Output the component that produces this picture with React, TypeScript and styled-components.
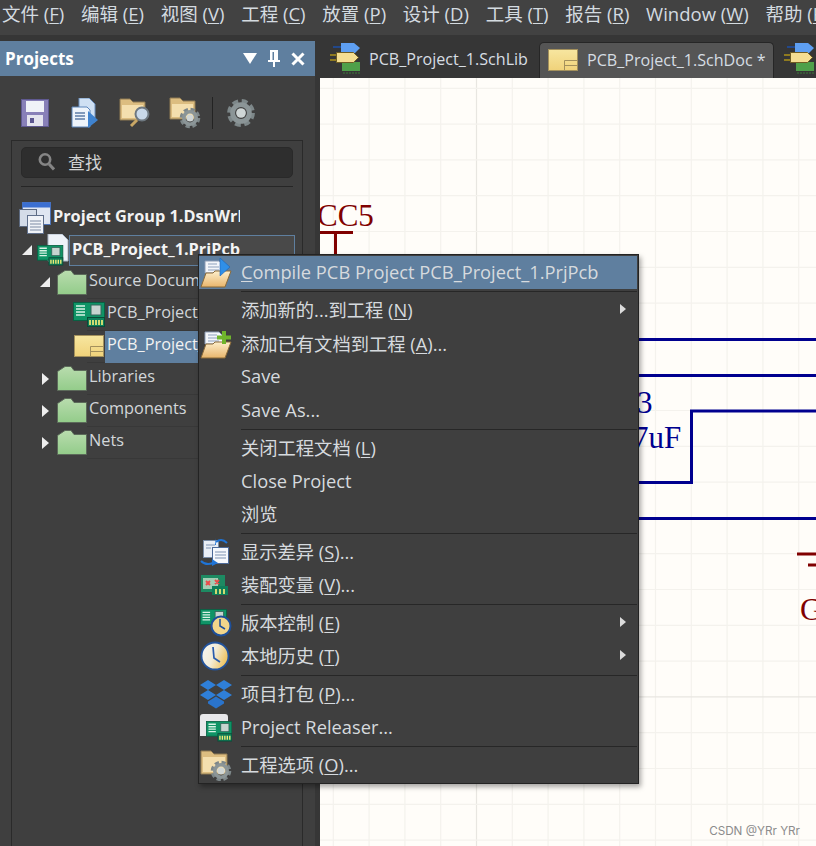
import { ReactNode } from 'react'
import styled, { createGlobalStyle } from 'styled-components'

const UI_FONT = `'Open Sans', 'Noto Sans CJK SC', sans-serif`

const GlobalStyle = createGlobalStyle`
  html, body {
    margin: 0;
    padding: 0;
    background: #363636;
  }
`

const Root = styled.div`
  position: relative;
  width: 816px;
  height: 846px;
  overflow: hidden;
  display: flex;
  flex-direction: column;
  background: #363636;
  font-family: ${UI_FONT};
  color: #d6dadd;
`

const MenuBar = styled.div`
  height: 35px;
  box-sizing: border-box;
  flex: none;
  display: flex;
  align-items: center;
  gap: 16.7px;
  padding: 0 0 9px 2px;
  background: #424242;
  font-size: 18.5px;
  white-space: nowrap;
  color: #d4dbe0;
`

const Access = styled.span`
  text-decoration: underline;
  text-underline-offset: 2px;
  text-decoration-thickness: 1px;
`

const Workspace = styled.div`
  flex: 1;
  min-height: 0;
  display: flex;
  padding-top: 6px;
  gap: 5px;
`

const Panel = styled.div`
  width: 315px;
  flex: none;
  display: flex;
  flex-direction: column;
  background: #3f3f3f;
`

const PanelTitle = styled.div`
  height: 35px;
  flex: none;
  display: flex;
  align-items: center;
  padding: 0 10px 0 5px;
  background: #5f7f9f;
  color: #fff;
  font-size: 17px;
  font-weight: 700;
`

const PanelName = styled.span`
  flex: 1;
`

const PanelControls = styled.div`
  display: flex;
  align-items: center;
  gap: 11px;
`

const Toolbar = styled.div`
  flex: none;
  height: 36px;
  display: flex;
  align-items: center;
  padding: 19px 0 9px 10px;
`

const Tool = styled.div`
  width: 50px;
  display: flex;
  justify-content: center;
`

const ToolSep = styled.div`
  width: 1px;
  height: 32px;
  margin: 0 3px 0 2px;
  background: #232323;
`

const TreeBox = styled.div`
  flex: 1;
  min-height: 0;
  margin: 0 12px 0 11px;
  border: 1px solid #2a2a2a;
  border-bottom: none;
  overflow: hidden;
`

const SearchBox = styled.div`
  height: 27px;
  margin: 6px 9px 0;
  display: flex;
  align-items: center;
  gap: 13px;
  padding: 0 0 2px 16px;
  background: #2e2e2e;
  border: 1px solid #292929;
  border-radius: 5px;
  font-size: 17px;
  color: #d4d4d4;
`

const TreeRule = styled.div`
  height: 1px;
  margin: 8px 9px 16px;
  background: #262626;
`

const TreeRow = styled.div<{ $indent: number; $rule?: boolean }>`
  height: 32px;
  box-sizing: border-box;
  display: flex;
  align-items: center;
  padding: 0 0 2px ${(p) => p.$indent}px;
  font-size: 16.3px;
  white-space: nowrap;
  background-image: ${(p) => (p.$rule ? 'linear-gradient(#383838, #383838)' : 'none')};
  background-repeat: no-repeat;
  background-position: 75px bottom;
  background-size: 100% 1px;
`

const ToggleSlot = styled.div<{ $wide?: boolean }>`
  width: ${(p) => (p.$wide ? 19 : 17)}px;
  flex: none;
`

const Toggle = styled.div<{ $open?: boolean }>`
  width: 0;
  height: 0;
  ${(p) =>
    p.$open
      ? `
    margin-left: 2px;
    border-bottom: 10px solid #eee;
    border-left: 10px solid transparent;
  `
      : `
    margin: 2px 0 0 4px;
    border-left: 7px solid #eee;
    border-top: 6px solid transparent;
    border-bottom: 6px solid transparent;
  `}
`

const TreeLabel = styled.span<{ $strong?: boolean }>`
  margin: 0 0 4px 2px;
  font-weight: ${(p) => (p.$strong ? 700 : 400)};
  color: ${(p) => (p.$strong ? '#f2f2f2' : '#d2d6d9')};
`

const ActiveLabel = styled.span`
  flex: 1;
  align-self: flex-start;
  height: 32px;
  margin: 0 0 -2px 1px;
  padding-left: 2px;
  line-height: 26px;
  color: #f2f2f2;
  background: #5f7f9f;
`

const ClippedLabel = styled(TreeLabel)`
  width: 187px;
  overflow: hidden;
`

const ProjectLabel = styled.div`
  flex: 1;
  align-self: flex-start;
  height: 31px;
  box-sizing: border-box;
  margin-right: 7px;
  padding: 0 0 4px 2px;
  display: flex;
  align-items: center;
  background: #494949;
  border: 1px solid #5f7f9f;
  font-weight: 700;
  color: #f4f4f4;
`

const Editor = styled.div`
  flex: 1;
  min-width: 0;
  display: flex;
  flex-direction: column;
`

const TabBar = styled.div`
  height: 37px;
  flex: none;
  display: flex;
  align-items: flex-end;
  background: #363636;
  font-size: 16.1px;
  white-space: nowrap;
`

const Tab = styled.div<{ $active?: boolean }>`
  height: ${(p) => (p.$active ? '36px' : '37px')};
  box-sizing: border-box;
  display: flex;
  align-items: center;
  gap: ${(p) => (p.$active ? '9px' : '8px')};
  padding: 0 ${(p) => (p.$active ? '7px' : '11px')} 2px ${(p) => (p.$active ? '8px' : '9px')};
  background: ${(p) => (p.$active ? '#555' : 'transparent')};
  border: ${(p) => (p.$active ? '1px solid #262626' : 'none')};
  border-bottom: none;
  border-radius: 5px 5px 0 0;
  color: #d6dde3;
`

const Canvas = styled.div`
  position: relative;
  flex: 1;
  min-height: 0;
  background: #fffdf9;
  overflow: hidden;
`

const Sheet = styled.svg`
  display: block;
`

const Watermark = styled.div`
  position: absolute;
  right: 16px;
  bottom: 8px;
  font-size: 11.7px;
  color: #8c8c8c;
  font-family: Inter, sans-serif;
`

const ContextMenu = styled.div`
  position: absolute;
  left: 198px;
  top: 254px;
  width: 441px;
  box-sizing: border-box;
  padding: 1px 1px 1px 0;
  background: #3f3f3f;
  border: 1px solid #232323;
  box-shadow: 2px 3px 5px rgba(0, 0, 0, 0.35);
  font-size: 18.3px;
  white-space: nowrap;
  color: #d6dade;
`

const MenuEntry = styled.div<{ $active?: boolean }>`
  height: 33.3px;
  box-sizing: border-box;
  padding-bottom: 2px;
  display: flex;
  align-items: center;
  background: ${(p) => (p.$active ? '#5f7f9f' : 'transparent')};
`

const MenuIcon = styled.div`
  width: 41px;
  padding: 2px 0 0 1px;
  flex: none;
  display: flex;
`

const MenuText = styled.span`
  flex: 1;
`

const MenuArrow = styled.div`
  width: 0;
  height: 0;
  margin-right: 11px;
  border-left: 6px solid #dcdcdc;
  border-top: 5px solid transparent;
  border-bottom: 5px solid transparent;
`

const MenuSep = styled.div`
  height: 1px;
  margin: 1.7px 0 1.7px 42px;
  background: #272727;
`

/* ─── icons ─────────────────────────────────────────────────── */

function Gear({ x, y, r }: { x: number; y: number; r: number }) {
  return (
    <g>
      <circle cx={x} cy={y} r={r * 0.86} fill="none" stroke="#7d8789" strokeWidth={r * 0.34} strokeDasharray={`${r * 0.42} ${r * 0.26}`} />
      <circle cx={x} cy={y} r={r * 0.62} fill="none" stroke="#8b9597" strokeWidth={r * 0.36} />
      <circle cx={x} cy={y} r={r * 0.36} fill="#cfd6d6" />
    </g>
  )
}

// green board with a chip and a connector flush to its right edge, 32x25
function PcbGlyph({ x, y, scale = 1 }: { x: number; y: number; scale?: number }) {
  return (
    <g transform={`translate(${x} ${y}) scale(${scale})`}>
      <rect x="0.5" y="0.5" width="31" height="18" fill="#0f9466" stroke="#0a5f43" />
      <path d="M3 4h9M3 7h9M3 10h9M3 13h9" stroke="#d9f3e6" strokeWidth="1.6" />
      <rect x="18" y="3" width="10" height="10" fill="#c6d4cf" stroke="#35665a" />
      <rect x="14.500" y="15.500" width="17" height="9" fill="#0f7f5a" stroke="#0a4a37" />
      <path d="M17 18v5M20 18v5M23 18v5M26 18v5M29 18v5" stroke="#f0ea76" strokeWidth="1.7" />
    </g>
  )
}

function OpenFolder() {
  return (
    <g>
      <path d="M5 3h14l4 4v8H5z" fill="#f4f6fa" stroke="#8b9bb4" />
      <path d="M8 6h9M8 9h11M8 12h11" stroke="#8ea1bd" />
      <path d="M1 29 6 15h7l2-2h16l-6 16z" fill="url(#openFolder)" stroke="#8b6a38" strokeLinejoin="round" />
      <defs>
        <linearGradient id="openFolder" x1="0" y1="0" x2="0" y2="1">
          <stop offset="0" stopColor="#fdeecb" />
          <stop offset="1" stopColor="#e8b56c" />
        </linearGradient>
      </defs>
    </g>
  )
}

const SaveIcon = () => (
  <svg width="28" height="28" viewBox="0 0 28 28">
    <rect x="0.5" y="0.5" width="27" height="27" fill="#8880b8" stroke="#5f5990" />
    <rect x="5" y="2" width="18" height="11" fill="#f0f2f8" />
    <rect x="6" y="16" width="16" height="11" fill="#e4e4ee" />
    <rect x="9" y="19" width="4" height="5" fill="#5c5690" />
  </svg>
)

const DocsIcon = () => (
  <svg width="28" height="30" viewBox="0 0 28 30">
    <path d="M8 0h10l6 6v18H8z" fill="#cfe0f3" stroke="#6b8fbe" />
    <path d="M1 9h15l3 3v17H1z" fill="#eef4fb" stroke="#5d86bb" />
    <path d="M4 15h10M4 18h10M4 21h10" stroke="#5d7ca8" strokeWidth="1.4" />
    <path d="M17 13l10 9-10 8z" fill="#3f83cf" />
  </svg>
)

const FolderSearchIcon = () => (
  <svg width="32" height="30" viewBox="0 0 32 30">
    <path d="M1 1h10l3 3h12v18H1z" fill="#dcbd80" stroke="#8f7a52" />
    <rect x="3" y="7" width="21" height="13" fill="#f4dfae" />
    <path d="M12 28l6-6" stroke="#c9a765" strokeWidth="3" />
    <circle cx="23" cy="16" r="6.5" fill="#c9d9ea" stroke="#6e7880" strokeWidth="2" />
  </svg>
)

const FolderGearIcon = () => (
  <svg width="32" height="32" viewBox="0 0 32 32">
    <path d="M1 1h10l3 3h12v18H1z" fill="#dcbd80" stroke="#8f7a52" />
    <rect x="3" y="7" width="21" height="13" fill="#f4dfae" />
    <Gear x={21} y={21} r={10} />
  </svg>
)

const GearIcon = () => (
  <svg width="28" height="28" viewBox="0 0 28 28">
    <Gear x={14} y={14} r={13.5} />
  </svg>
)

const SearchGlyph = () => (
  <svg width="17" height="19" viewBox="0 0 17 19">
    <circle cx="7" cy="7.5" r="5.2" fill="none" stroke="#858585" strokeWidth="2.6" />
    <path d="M11 12l5 5.5" stroke="#858585" strokeWidth="3" />
  </svg>
)

const DownCaret = () => (
  <svg width="14" height="11" viewBox="0 0 14 11">
    <path d="M0 0h14L7 11z" fill="#fff" />
  </svg>
)

const PinGlyph = () => (
  <svg width="12" height="17" viewBox="0 0 12 17">
    <path d="M2 0h8v10h2v2H0v-2h2zM4.5 2v8h1.5V2zM5 12h2v5H5z" fill="#fff" fillRule="evenodd" />
  </svg>
)

const CloseGlyph = () => (
  <svg width="14" height="14" viewBox="0 0 14 14">
    <path d="M1.5 1.5l11 11M12.5 1.5l-11 11" stroke="#fff" strokeWidth="3" />
  </svg>
)

const GroupIcon = () => (
  <svg width="32" height="32" viewBox="0 0 32 32">
    <rect x="3.5" y="0.5" width="28" height="22" fill="#dfe6f2" stroke="#4f74b8" />
    <rect x="3.5" y="0.5" width="28" height="5" fill="#3b6fd1" />
    <rect x="0.5" y="7.5" width="17" height="17" fill="#d4dce8" stroke="#5d6a80" />
    <rect x="8.5" y="13.5" width="16" height="18" fill="#f0f3f8" stroke="#60708c" />
    <path d="M11 19h11M11 22h11M11 25h11M11 28h11" stroke="#7d8ba4" />
  </svg>
)

const ProjectIcon = () => (
  <svg width="32" height="32" viewBox="0 0 32 32">
    <path d="M11 0h14l6 6v21H11z" fill="#eef2f8" stroke="#aab6c6" />
    <PcbGlyph x={0} y={11} scale={0.82} />
  </svg>
)

const GreenFolder = () => (
  <svg width="30" height="25" viewBox="0 0 30 25">
    <defs>
      <linearGradient id="greenFolder" x1="0" y1="0" x2="0" y2="1">
        <stop offset="0" stopColor="#b9dcae" />
        <stop offset="1" stopColor="#93cc8a" />
      </linearGradient>
    </defs>
    <path d="M0.5 5.5 8 0.5h6l3 4h12.5v20H0.5z" fill="url(#greenFolder)" stroke="#5c6a5a" />
  </svg>
)

const PcbIcon = () => (
  <svg width="32" height="25" viewBox="0 0 32 25">
    <PcbGlyph x={0} y={0} />
  </svg>
)

const SchDocIcon = () => (
  <svg width="30" height="22" viewBox="0 0 30 22">
    <defs>
      <linearGradient id="schDoc" x1="0" y1="0" x2="0" y2="1">
        <stop offset="0" stopColor="#f7e6a0" />
        <stop offset="1" stopColor="#f0d27a" />
      </linearGradient>
    </defs>
    <rect x="0.5" y="0.5" width="29" height="21" fill="url(#schDoc)" stroke="#a3905c" />
    <path d="M16.5 21.5v-10h13M16.5 16.5h13" fill="none" stroke="#a3905c" />
  </svg>
)

const SchLibIcon = () => (
  <svg width="32" height="31" viewBox="0 0 32 31">
    <path d="M13 4H4" stroke="#1d4fa8" strokeWidth="1.5" />
    <path d="M12 0h13l6 5-6 6H12z" fill="#5e9ff2" />
    <rect x="13" y="19" width="18" height="9" fill="#4fa04a" />
    <path d="M15 29v2M18 29v2M21 29v2M24 29v2M27 29v2M30 29v2" stroke="#3b7a38" />
    <path d="M1 12h7M1 17h7" stroke="#8f7a1f" strokeWidth="2" />
    <path d="M7.5 9.5h17l5 5-5 5h-17z" fill="#f4de92" stroke="#6f5d22" />
  </svg>
)

const CompileIcon = () => (
  <svg width="32" height="30" viewBox="0 0 32 30">
    <OpenFolder />
    <path d="M20 0l10 9-10 9z" fill="#2f8fe8" stroke="#1d63b5" strokeWidth="0.6" />
  </svg>
)

const AddFolderIcon = () => (
  <svg width="32" height="30" viewBox="0 0 32 30">
    <OpenFolder />
    <path d="M24 2v13M17 8.500h14" stroke="#6fb52c" strokeWidth="4" />
  </svg>
)

const DiffIcon = () => (
  <svg width="30" height="30" viewBox="0 0 30 30">
    <rect x="3.500" y="3.500" width="15" height="17" fill="#e9eef6" stroke="#7a8ca6" />
    <rect x="12.500" y="10.500" width="16" height="16" fill="#f6f8fc" stroke="#4d6a98" />
    <path d="M15 15h11M15 18h11M15 21h11M6 8h9M6 11h5" stroke="#7f93b2" />
    <path d="M16 5c4-3 8-2 11 1" fill="none" stroke="#1f74d6" strokeWidth="2" />
    <path d="M16 1v7h-1z" fill="#1f74d6" />
    <path d="M1 24c3 3 7 4 12 2" fill="none" stroke="#1f74d6" strokeWidth="2" />
    <path d="M12 22l6 4-6 3z" fill="#1f74d6" />
  </svg>
)

const VariantIcon = () => (
  <svg width="28" height="20" viewBox="0 0 28 20">
    <rect x="1" y="0" width="24" height="17" fill="#1d8a62" />
    <rect x="3" y="3" width="15" height="11" fill="#a4cdb4" />
    <path d="M6 6l4 4M10 6l-4 4M15 5l4 4M19 5l-4 4" stroke="#ea4a4a" strokeWidth="1.900" />
    <rect x="12" y="11" width="16" height="9" fill="#0f7f5a" />
    <path d="M16 14v5M20 14v5M24 14v5" stroke="#f0ea76" strokeWidth="1.700" />
  </svg>
)

const VersionIcon = () => (
  <svg width="32" height="28" viewBox="0 0 32 28">
    <PcbGlyph x={0} y={0} scale={0.84} />
    <circle cx="21" cy="17" r="9.500" fill="#f1d58a" stroke="#1d4f9a" strokeWidth="2" />
    <path d="M20 10v7l5 3" fill="none" stroke="#1d4f9a" strokeWidth="1.500" />
  </svg>
)

const ClockIcon = () => (
  <svg width="30" height="30" viewBox="0 0 30 30">
    <defs>
      <linearGradient id="clockFace" x1="0" y1="0" x2="1" y2="0.4">
        <stop offset="0" stopColor="#f6f6f6" />
        <stop offset="0.55" stopColor="#f2ecd8" />
        <stop offset="1" stopColor="#eec566" />
      </linearGradient>
    </defs>
    <circle cx="15" cy="15" r="13.500" fill="url(#clockFace)" stroke="#23539c" strokeWidth="1.800" />
    <path d="M13 6l1 11 6 4" fill="none" stroke="#2a5cad" strokeWidth="1.700" />
  </svg>
)

const DropboxIcon = () => (
  <svg width="32" height="30" viewBox="0 0 32 30">
    <path d="M8 1l8 5-8 5-8-5zM24 1l8 5-8 5-8-5zM8 11l8 5-8 5-8-5zM24 11l8 5-8 5-8-5z" fill="#2f7fd8" />
    <path d="M8 22.500l8-5 8 5v2l-8 5-8-5z" fill="#2a74cc" />
  </svg>
)

const ReleaserIcon = () => (
  <svg width="32" height="29" viewBox="0 0 32 29">
    <path d="M0 23V4q0-3 3-3h22q3 0 3 3v6H8v13z" fill="#e8e8ea" />
    <PcbGlyph x={6} y={8} scale={0.82} />
  </svg>
)

const OptionsIcon = () => (
  <svg width="32" height="31" viewBox="0 0 32 31">
    <path d="M1 1h10l3 3h13v20H1z" fill="#dcbd80" stroke="#8f7a52" />
    <rect x="3" y="7" width="22" height="15" fill="#f4dfae" />
    <Gear x={21} y={21} r={10} />
  </svg>
)

/* ─── data ──────────────────────────────────────────────────── */

const MENUS: [string, string, string][] = [
  ['文件 (', 'F', ')'],
  ['编辑 (', 'E', ')'],
  ['视图 (', 'V', ')'],
  ['工程 (', 'C', ')'],
  ['放置 (', 'P', ')'],
  ['设计 (', 'D', ')'],
  ['工具 (', 'T', ')'],
  ['报告 (', 'R', ')'],
  ['Window (', 'W', ')'],
  ['帮助 (', 'H', ')'],
]

type Entry =
  | { sep: true }
  | { sep?: false; text: string; access?: string; tail?: string; icon?: ReactNode; sub?: boolean; active?: boolean }

const ENTRIES: Entry[] = [
  { text: '', access: 'C', tail: 'ompile PCB Project PCB_Project_1.PrjPcb', icon: <CompileIcon />, active: true },
  { sep: true },
  { text: '添加新的...到工程 (', access: 'N', tail: ')', sub: true },
  { text: '添加已有文档到工程 (', access: 'A', tail: ')...', icon: <AddFolderIcon /> },
  { text: 'Save' },
  { text: 'Save As...' },
  { sep: true },
  { text: '关闭工程文档 (', access: 'L', tail: ')' },
  { text: 'Close Project' },
  { text: '浏览' },
  { sep: true },
  { text: '显示差异 (', access: 'S', tail: ')...', icon: <DiffIcon /> },
  { text: '装配变量 (', access: 'V', tail: ')...', icon: <VariantIcon /> },
  { sep: true },
  { text: '版本控制 (', access: 'E', tail: ')', icon: <VersionIcon />, sub: true },
  { text: '本地历史 (', access: 'T', tail: ')', icon: <ClockIcon />, sub: true },
  { sep: true },
  { text: '项目打包 (', access: 'P', tail: ')...', icon: <DropboxIcon /> },
  { text: 'Project Releaser...', icon: <ReleaserIcon /> },
  { sep: true },
  { text: '工程选项 (', access: 'O', tail: ')...', icon: <OptionsIcon /> },
]

const GRID_X = Array.from({ length: 14 }, (_, i) => 333.3 + i * 35.8)
const GRID_Y = Array.from({ length: 22 }, (_, i) => 88.3 + i * 35.8)
const WIRE = '#00008f'
const PART = '#800000'
const SERIF = "'Liberation Serif', serif"

function Schematic() {
  return (
    <Sheet width="496" height="768" viewBox="320 78 496 768">
      {GRID_X.map((x, i) => (
        <line key={x} x1={x} x2={x} y1="78" y2="846" stroke={i === 4 ? '#e8e6e1' : '#f4f2ed'} strokeWidth="1.2" />
      ))}
      {GRID_Y.map((y, i) => (
        <line key={y} x1="320" x2="816" y1={y} y2={y} stroke={i === 17 ? '#e8e6e1' : '#f4f2ed'} strokeWidth="1.2" />
      ))}
      <path d="M320 232.500h33M335.500 232.500v24" fill="none" stroke={PART} strokeWidth="3" />
      <text x="317" y="226" fontFamily={SERIF} fontSize="31" fill={PART}>
        CC5
      </text>
      <path
        d="M630 339.500h186M630 375.500h186M816 411h-124.500v71.500H630M630 518.500h186"
        fill="none"
        stroke={WIRE}
        strokeWidth="3"
      />
      <text x="637" y="413" fontFamily={SERIF} fontSize="31" fill={WIRE}>
        3
      </text>
      <text x="633" y="448" fontFamily={SERIF} fontSize="31" fill={WIRE}>
        7uF
      </text>
      <path d="M797 554h19M808 565h8" fill="none" stroke={PART} strokeWidth="3" />
      <text x="800" y="620" fontFamily={SERIF} fontSize="31" fill={PART}>
        G
      </text>
    </Sheet>
  )
}

export default function App() {
  return (
    <Root>
      <GlobalStyle />
      <MenuBar>
        {MENUS.map(([head, key, tail]) => (
          <span key={head}>
            {head}
            <Access>{key}</Access>
            {tail}
          </span>
        ))}
      </MenuBar>

      <Workspace>
        <Panel>
          <PanelTitle>
            <PanelName>Projects</PanelName>
            <PanelControls>
              <DownCaret />
              <PinGlyph />
              <CloseGlyph />
            </PanelControls>
          </PanelTitle>
          <Toolbar>
            <Tool><SaveIcon /></Tool>
            <Tool><DocsIcon /></Tool>
            <Tool><FolderSearchIcon /></Tool>
            <Tool><FolderGearIcon /></Tool>
            <ToolSep />
            <Tool><GearIcon /></Tool>
          </Toolbar>
          <TreeBox>
            <SearchBox>
              <SearchGlyph />
              查找
            </SearchBox>
            <TreeRule />
            <TreeRow $indent={7}>
              <GroupIcon />
              <ClippedLabel $strong>Project Group 1.DsnWrl</ClippedLabel>
            </TreeRow>
            <TreeRow $indent={8}>
              <ToggleSlot><Toggle $open /></ToggleSlot>
              <ProjectIcon />
              <ProjectLabel>PCB_Project_1.PriPcb</ProjectLabel>
            </TreeRow>
            <TreeRow $indent={26} $rule>
              <ToggleSlot $wide><Toggle $open /></ToggleSlot>
              <GreenFolder />
              <TreeLabel>Source Documents</TreeLabel>
            </TreeRow>
            <TreeRow $indent={61} $rule>
              <PcbIcon />
              <TreeLabel>PCB_Project_1.PcbDoc</TreeLabel>
            </TreeRow>
            <TreeRow $indent={62} $rule>
              <SchDocIcon />
              <ActiveLabel>PCB_Project_1.SchDoc</ActiveLabel>
            </TreeRow>
            {['Libraries', 'Components', 'Nets'].map((name) => (
              <TreeRow key={name} $indent={26} $rule>
                <ToggleSlot $wide><Toggle /></ToggleSlot>
                <GreenFolder />
                <TreeLabel>{name}</TreeLabel>
              </TreeRow>
            ))}
          </TreeBox>
        </Panel>

        <Editor>
          <TabBar>
            <Tab>
              <SchLibIcon />
              PCB_Project_1.SchLib
            </Tab>
            <Tab $active>
              <SchDocIcon />
              PCB_Project_1.SchDoc *
            </Tab>
            <Tab>
              <SchLibIcon />
            </Tab>
          </TabBar>
          <Canvas>
            <Schematic />
            <Watermark>CSDN @YRr YRr</Watermark>
          </Canvas>
        </Editor>
      </Workspace>

      <ContextMenu>
        {ENTRIES.map((entry, i) =>
          entry.sep ? (
            <MenuSep key={i} />
          ) : (
            <MenuEntry key={i} $active={entry.active}>
              <MenuIcon>{entry.icon}</MenuIcon>
              <MenuText>
                {entry.text}
                {entry.access && <Access>{entry.access}</Access>}
                {entry.tail}
              </MenuText>
              {entry.sub && <MenuArrow />}
            </MenuEntry>
          ),
        )}
      </ContextMenu>
    </Root>
  )
}
